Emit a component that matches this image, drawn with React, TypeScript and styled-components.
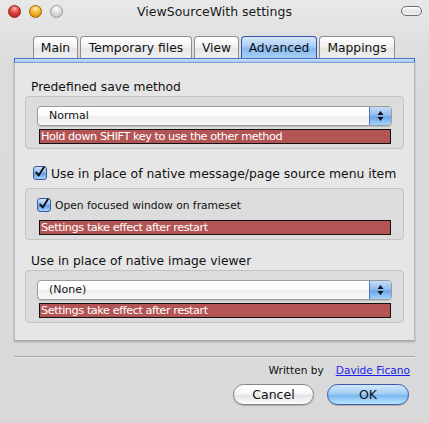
import React from "react";
import styled, { createGlobalStyle } from "styled-components";

const GlobalStyle = createGlobalStyle`
  html, body { margin: 0; padding: 0; }
  body {
    width: 429px; height: 423px; overflow: hidden;
    font-family: "DejaVu Sans", "Noto Sans", sans-serif;
    color: #111;
  }
`;

const Window = styled.div`
  width: 429px;
  height: 423px;
  display: flex;
  flex-direction: column;
  background: linear-gradient(#e8e8e8 0px, #dcdcdc 60px, #d9d9d9 100%);
`;

const TitleBar = styled.div`
  height: 22px;
  display: grid;
  grid-template-columns: 1fr auto 1fr;
  align-items: center;
`;

const Lights = styled.div`
  display: flex;
  gap: 8px;
  padding-left: 8px;
`;

const Light = styled.div<{ $c: "red" | "orange" | "gray" }>`
  width: 13px;
  height: 13px;
  border-radius: 50%;
  box-sizing: border-box;
  border: 1px solid
    ${(p) => (p.$c === "red" ? "#8d1f1c" : p.$c === "orange" ? "#9a6205" : "#9a9a9a")};
  background: ${(p) =>
    p.$c === "red"
      ? "radial-gradient(circle at 50% 25%, #f7b3b0 0, #e2423c 45%, #b51612 100%)"
      : p.$c === "orange"
      ? "radial-gradient(circle at 50% 25%, #fff1b0 0, #f6b52c 45%, #d27d05 100%)"
      : "radial-gradient(circle at 50% 25%, #ffffff 0, #dedede 45%, #b9b9b9 100%)"};
`;

const Title = styled.div`
  font-size: 12.5px;
  color: #1a1a1a;
`;

const Pill = styled.div`
  justify-self: end;
  margin-right: 7px;
  width: 21px;
  height: 10px;
  box-sizing: border-box;
  border: 1px solid #6f6f6f;
  border-radius: 5px;
  background: linear-gradient(#ffffff, #e2e2e2 60%, #f4f4f4);
`;

const TabsRow = styled.div`
  display: flex;
  gap: 2px;
  margin-top: 14px;
  padding-left: 33px;
  height: 22px;
`;

const Tab = styled.div<{ $w: number; $active?: boolean }>`
  width: ${(p) => p.$w}px;
  height: 22px;
  box-sizing: border-box;
  border: 1px solid ${(p) => (p.$active ? "#3554a8" : "#8e8e8e")};
  border-bottom: none;
  border-radius: 4px 4px 0 0;
  display: flex;
  align-items: center;
  justify-content: center;
  font-size: 12.3px;
  padding-top: 1px;
  color: #111;
  background: ${(p) =>
    p.$active
      ? "linear-gradient(#d6e8fb 0%, #a9cdf5 45%, #86b9f0 55%, #a6d0f8 100%)"
      : "linear-gradient(#fefefe 0%, #f3f3f3 45%, #e6e6e6 55%, #efefef 100%)"};
`;

const Panel = styled.div`
  margin: 0 14px;
  height: 283px;
  display: flex;
  flex-direction: column;
  background: #e6e6e6;
  border-left: 1px solid #b9b9b9;
  border-right: 1px solid #b9b9b9;
  border-bottom: 1px solid #a9a9a9;
  box-shadow: 0 1px 2px rgba(0, 0, 0, 0.25);
  box-sizing: border-box;
`;

const Strip = styled.div`
  height: 5px;
  box-sizing: border-box;
  margin: 0 -1px;
  border: 1px solid #4d74c6;
  border-bottom-color: #7aa0dc;
  background: linear-gradient(#c7defa, #a9caf2);
`;

const Body = styled.div`
  display: flex;
  flex-direction: column;
  padding: 16px 10px 0 10px;
`;

const Label = styled.div<{ $top?: number }>`
  height: 16px;
  line-height: 16px;
  font-size: 12.3px;
  padding-left: 6px;
  margin-top: ${(p) => p.$top ?? 0}px;
  margin-bottom: 1px;
  color: #111;
`;

const Group = styled.div<{ $top?: number }>`
  display: flex;
  flex-direction: column;
  margin-top: ${(p) => p.$top ?? 0}px;
  padding: 9px 11px 4px 11px;
  background: #dcdcdc;
  border: 1px solid #c3c3c3;
  border-radius: 4px;
`;

const Select = styled.div`
  height: 20px;
  display: flex;
  box-sizing: border-box;
  border: 1px solid #9b9b9b;
  border-radius: 4px;
  overflow: hidden;
  background: linear-gradient(#ffffff 0%, #fbfbfb 45%, #eeeeee 55%, #f8f8f8 100%);
  box-shadow: 0 1px 1px rgba(0, 0, 0, 0.15);
`;

const SelectText = styled.div`
  flex: 1;
  font-size: 11px;
  line-height: 18px;
  padding-left: 11px;
  color: #111;
`;

const Stepper = styled.div`
  width: 21px;
  display: flex;
  align-items: center;
  justify-content: center;
  border-left: 1px solid #5577b8;
  background: linear-gradient(#c5dcf8 0%, #93bdf0 45%, #6ba4ec 55%, #a5d4fb 100%);
`;

const Warning = styled.div<{ $top: number }>`
  margin: ${(p) => p.$top}px 1px 0 2px;
  height: 15px;
  box-sizing: border-box;
  border: 1px solid #111;
  background: #b35555;
  color: #fff;
  font-size: 11.3px;
  letter-spacing: -0.45px;
  line-height: 13px;
  padding-left: 1px;
  white-space: nowrap;
  overflow: hidden;
`;

const CheckRow = styled.label<{ $top?: number; $pl?: number; $small?: boolean }>`
  display: flex;
  align-items: center;
  gap: 4px;
  margin-top: ${(p) => p.$top ?? 0}px;
  padding-left: ${(p) => p.$pl ?? 0}px;
  height: ${(p) => (p.$small ? 14 : 16)}px;
  font-size: ${(p) => (p.$small ? 10.7 : 12.4)}px;
  color: #111;
  white-space: nowrap;
`;

const Box = styled.span`
  width: 14px;
  height: 14px;
  flex: none;
  box-sizing: border-box;
  border: 1px solid #3c5a9a;
  border-radius: 3px;
  background: linear-gradient(#cfe3fb 0%, #8fbcf1 45%, #5f9ce9 55%, #a3d2fb 100%);
  display: flex;
  align-items: center;
  justify-content: center;
  overflow: visible;
`;

const Separator = styled.div`
  margin: 15px 14px 0 14px;
  height: 1px;
  background: #a6a6a6;
  box-shadow: 0 1px 0 #ececec;
`;

const CreditRow = styled.div`
  display: flex;
  justify-content: flex-end;
  align-items: center;
  gap: 12px;
  margin-top: 6px;
  padding-right: 19px;
  height: 14px;
  font-size: 10.6px;
`;

const Link = styled.a`
  color: #1c1cf0;
  text-decoration: underline;
`;

const ButtonRow = styled.div`
  display: flex;
  justify-content: flex-end;
  gap: 13px;
  margin-top: 7px;
  padding-right: 20px;
`;

const Button = styled.button<{ $w: number; $default?: boolean }>`
  width: ${(p) => p.$w}px;
  height: 21px;
  box-sizing: border-box;
  border-radius: 11px;
  border: 1px solid ${(p) => (p.$default ? "#3b5aa3" : "#858585")};
  font-family: "DejaVu Sans", sans-serif;
  font-size: 12.5px;
  color: #111;
  padding: 0;
  line-height: 19px;
  background: ${(p) =>
    p.$default
      ? "linear-gradient(#d3e8fc 0%, #a3cef6 45%, #7bbaf2 55%, #b8e4ff 100%)"
      : "linear-gradient(#ffffff 0%, #f7f7f7 45%, #e5e5e5 55%, #fcfcfc 100%)"};
  box-shadow: 0 1px 1px rgba(0, 0, 0, 0.2);
`;

const Check = () => (
  <svg width="14" height="14" viewBox="0 0 14 14" style={{ marginTop: -3 }}>
    <path d="M2.5 7.5 L5.5 11 L11.5 1.5" fill="none" stroke="#111" strokeWidth="2.2" strokeLinecap="round" strokeLinejoin="round" />
  </svg>
);

const Arrows = () => (
  <svg width="7" height="12" viewBox="0 0 7 12">
    <path d="M3.5 1 L6.5 5 L0.5 5 Z" fill="#111" />
    <path d="M3.5 11 L6.5 7 L0.5 7 Z" fill="#111" />
  </svg>
);

const Dropdown = ({ value }: { value: string }) => (
  <Select>
    <SelectText>{value}</SelectText>
    <Stepper>
      <Arrows />
    </Stepper>
  </Select>
);

export default function App() {
  return (
    <>
      <GlobalStyle />
      <Window>
        <TitleBar>
          <Lights>
            <Light $c="red" />
            <Light $c="orange" />
            <Light $c="gray" />
          </Lights>
          <Title>ViewSourceWith settings</Title>
          <Pill />
        </TitleBar>
        <TabsRow>
          <Tab $w={45}>Main</Tab>
          <Tab $w={112}>Temporary files</Tab>
          <Tab $w={45}>View</Tab>
          <Tab $w={76} $active>
            Advanced
          </Tab>
          <Tab $w={76}>Mappings</Tab>
        </TabsRow>
        <Panel>
          <Strip />
          <Body>
            <Label>Predefined save method</Label>
            <Group>
              <Dropdown value="Normal" />
              <Warning $top={3}>Hold down SHIFT key to use the other method</Warning>
            </Group>
            <CheckRow $top={16} $pl={8}>
              <Box>
                <Check />
              </Box>
              Use in place of native message/page source menu item
            </CheckRow>
            <Group $top={7}>
              <CheckRow $small>
                <Box>
                  <Check />
                </Box>
                Open focused window on frameset
              </CheckRow>
              <Warning $top={8}>Settings take effect after restart</Warning>
            </Group>
            <Label $top={13}>Use in place of native image viewer</Label>
            <Group>
              <Dropdown value="(None)" />
              <Warning $top={3}>Settings take effect after restart</Warning>
            </Group>
          </Body>
        </Panel>
        <Separator />
        <CreditRow>
          <span>Written by</span>
          <Link href="#">Davide Ficano</Link>
        </CreditRow>
        <ButtonRow>
          <Button $w={81}>Cancel</Button>
          <Button $w={82} $default>
            OK
          </Button>
        </ButtonRow>
      </Window>
    </>
  );
}
